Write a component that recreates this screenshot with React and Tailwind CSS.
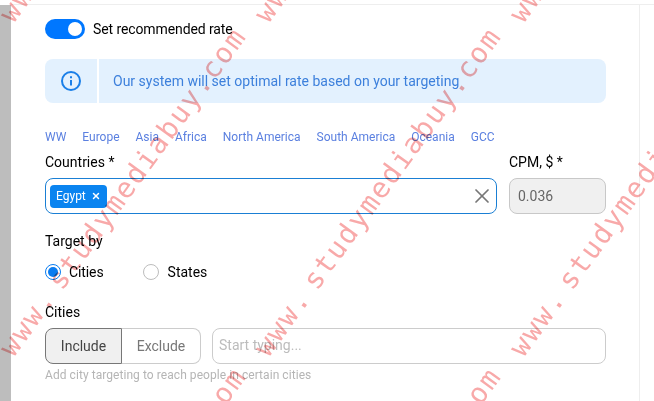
import { X } from 'lucide-react';

const regions = ['WW', 'Europe', 'Asia', 'Africa', 'North America', 'South America', 'Oceania', 'GCC'];

// centre of each watermark line, repeated across the page
const marks = [
  [123, 192], [378, 192], [633, 192],
  [123, -142], [378, -142], [633, -142],
  [123, 532], [378, 532], [633, 532],
];

function Watermark() {
  return (
    <div className="pointer-events-none absolute inset-0 overflow-hidden mix-blend-multiply">
      {marks.map(([x, y]) => (
        <span
          key={`${x}-${y}`}
          className="absolute whitespace-nowrap font-['DejaVu_Sans_Mono',monospace] text-[28px] leading-none tracking-[1.7px] [word-spacing:-10px] text-[#f8a9a9]"
          style={{ left: x, top: y, transform: 'translate(-50%, -50%) rotate(-54deg)' }}
        >
          www. studymediabuy.com
        </span>
      ))}
    </div>
  );
}

export default function App() {
  return (
    <div className="relative h-[401px] w-[654px] overflow-hidden bg-white font-['Roboto',sans-serif] text-sm text-black">
      <div className="flex h-full">
        <div className="mt-[5px] w-[11px] shrink-0 bg-[#bdbdbd]" />
        <div className="mt-1 flex-1 border-t border-[#eeeeee]">
          <div className="h-full w-[629px] border-r border-[#eeeeee] pl-[34px] pr-[33px] pt-[14px]">
            {/* Recommended rate toggle */}
            <div className="flex h-5 items-center gap-2">
              <div className="flex h-5 w-10 items-center justify-end rounded-full bg-[#0077ff] pr-[3px]">
                <div className="h-[14px] w-[14px] rounded-full bg-white" />
              </div>
              <span className="tracking-[-0.1px]">Set recommended rate</span>
            </div>

            {/* Info banner */}
            <div className="mt-5 flex h-11 items-center rounded-lg bg-[#e3f1fe]">
              <div className="flex h-full w-[54px] items-center justify-center border-r-2 border-white">
                <svg width="20" height="20" viewBox="0 0 20 20" fill="none" stroke="#1a7fe8" strokeWidth="2">
                  <circle cx="10" cy="10" r="9" />
                  <path d="M10 9v5.5" />
                  <path d="M10 5.2v2" />
                </svg>
              </div>
              <span className="ml-[14px] text-[#3d80dc]">Our system will set optimal rate based on your targeting</span>
            </div>

            {/* Region shortcuts */}
            <div className="mt-[26px] flex gap-4 text-xs leading-4 text-[#5b80e0]">
              {regions.map((r) => (
                <span key={r}>{r}</span>
              ))}
            </div>

            <div className="mt-2 flex gap-3">
              <div className="w-[452px]">
                <div className="leading-[18px]">Countries *</div>
                <div className="mt-[7px] flex h-9 items-center rounded-lg border border-[#1a7fd4] pl-1 pr-[2px]">
                  <div className="flex h-[23px] items-center gap-[5px] rounded bg-[#0a84f0] px-[6px] text-xs text-white">
                    Egypt
                    <X size={10} strokeWidth={3.5} />
                  </div>
                  <X size={24} strokeWidth={1.75} className="ml-auto text-[#777777]" />
                </div>
              </div>
              <div className="w-[97px]">
                <div className="leading-[18px]">CPM, $ *</div>
                <div className="mt-[7px] flex h-9 items-center rounded-lg border border-[#c8c8c8] bg-[#f0f0f0] pl-2 text-[#666666]">
                  0.036
                </div>
              </div>
            </div>

            <div className="mt-[18px] leading-[18px]">Target by</div>

            <div className="mt-[14px] flex h-4 items-center">
              <div className="flex h-4 w-4 items-center justify-center rounded-full border border-[#0a7cf0]">
                <div className="h-[10px] w-[10px] rounded-full bg-[#0a7cf0]" />
              </div>
              <span className="ml-2 tracking-[-0.1px]">Cities</span>
              <div className="ml-[39px] h-4 w-4 rounded-full border border-[#bdbdbd]" />
              <span className="ml-[9px]">States</span>
            </div>

            <div className="mt-[23px] leading-[18px]">Cities</div>

            <div className="mt-[7px] flex h-9 gap-[11px]">
              <div className="flex w-[156px]">
                <div className="flex w-[77px] items-center justify-center rounded-l-lg border border-[#777777] bg-[#f0f0f0] text-[#444444]">
                  Include
                </div>
                <div className="flex flex-1 items-center justify-center rounded-r-lg border border-l-0 border-[#cccccc] text-[#777777]">
                  Exclude
                </div>
              </div>
              <div className="flex flex-1 items-center rounded-lg border border-[#cccccc] pb-[2px] pl-[6px] text-[#bcbcbc]">
                Start typing...
              </div>
            </div>

            <div className="mt-[3px] text-xs leading-4 tracking-[0.06px] text-[#b5b5b5]">Add city targeting to reach people in certain cities</div>
          </div>
        </div>
      </div>
      <Watermark />
    </div>
  );
}
